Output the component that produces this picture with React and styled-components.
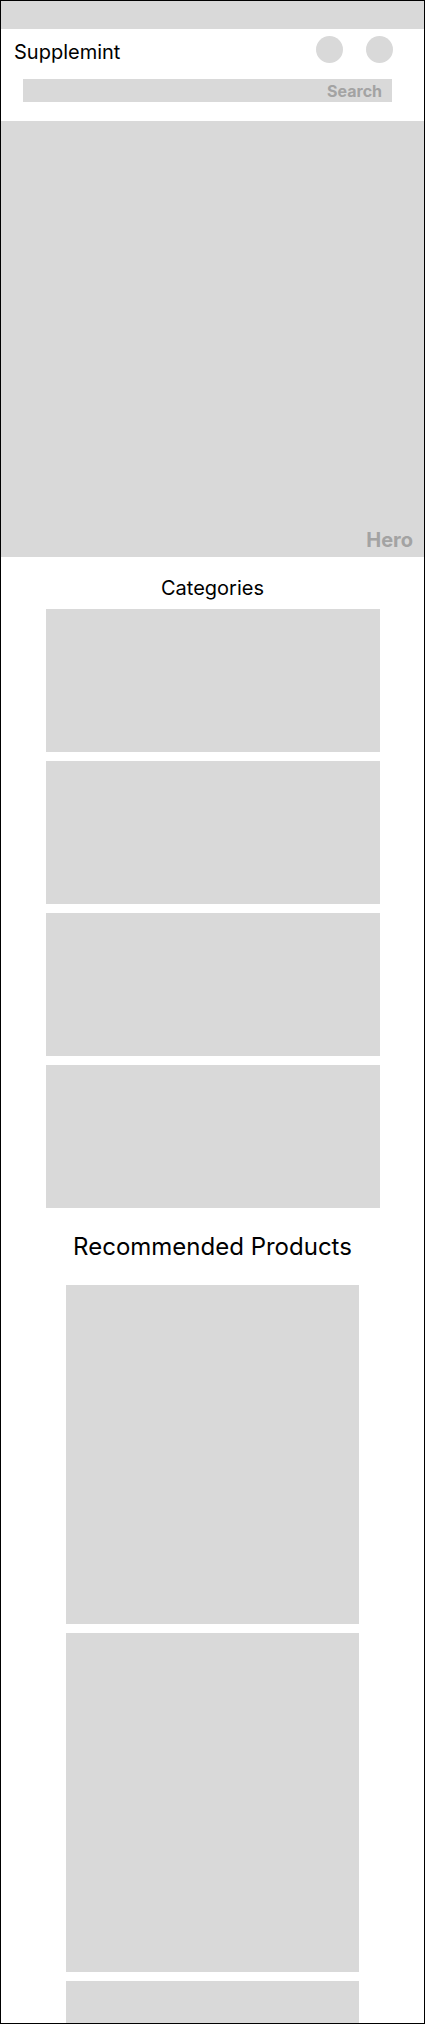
import React from 'react'
import styled, { createGlobalStyle } from 'styled-components'

const GlobalStyle = createGlobalStyle`
    html, body {
        margin: 0;
        padding: 0;
        background: #fff;
    }
    * {
        box-sizing: border-box;
    }
`

const Frame = styled.div`
    width: 425px;
    height: 2024px;
    border: 1px solid #000;
    overflow: hidden;
    background: #fff;
    font-family: Inter, "Noto Sans", sans-serif;
    color: #000;
`

const TopStrip = styled.div`
    height: 28px;
    background: #d9d9d9;
`

const Header = styled.header`
    padding: 7px 0 19px;
`

const HeaderRow = styled.div`
    display: flex;
    align-items: flex-start;
    padding: 0 31px 0 13px;
`

const Logo = styled.div`
    flex: 1;
    padding-top: 4px;
    font-size: 20px;
    line-height: 24px;
`

const IconSlot = styled.div`
    width: 27px;
    height: 27px;
    border-radius: 50%;
    background: #d9d9d9;
    margin-left: ${(p) => p.$gap || 0}px;
`

const SearchBar = styled.div`
    margin: 15px 32px 0 22px;
    height: 23px;
    background: #d9d9d9;
    display: flex;
    align-items: center;
    justify-content: flex-end;
    padding-right: 10px;
`

const PlaceholderLabel = styled.span`
    font-weight: 700;
    font-size: ${(p) => p.$size}px;
    line-height: 1;
    color: #a3a3a3;
`

const Hero = styled.section`
    height: 436px;
    background: #d9d9d9;
    display: flex;
    align-items: flex-end;
    justify-content: flex-end;
    padding: 0 11px 7px 0;
`

const Section = styled.section`
    display: flex;
    flex-direction: column;
    align-items: center;
    padding-top: ${(p) => p.$top}px;
`

const SectionTitle = styled.h2`
    margin: 0 0 ${(p) => p.$gap}px;
    font-weight: 400;
    font-size: ${(p) => p.$size}px;
    line-height: ${(p) => Math.round(p.$size * 1.2)}px;
`

const CardList = styled.div`
    display: flex;
    flex-direction: column;
    gap: 9px;
`

const Card = styled.div`
    width: ${(p) => p.$w}px;
    height: ${(p) => p.$h}px;
    background: #d9d9d9;
    flex-shrink: 0;
`

const categories = ['vitamins', 'protein', 'minerals', 'herbal']
const products = ['p1', 'p2', 'p3']

export default function App() {
    return (
        <>
            <GlobalStyle />
            <Frame>
                <TopStrip />
                <Header>
                    <HeaderRow>
                        <Logo>Supplemint</Logo>
                        <IconSlot />
                        <IconSlot $gap={23} />
                    </HeaderRow>
                    <SearchBar>
                        <PlaceholderLabel $size={16}>Search</PlaceholderLabel>
                    </SearchBar>
                </Header>

                <Hero>
                    <PlaceholderLabel $size={20}>Hero</PlaceholderLabel>
                </Hero>

                <Section $top={19}>
                    <SectionTitle $size={20} $gap={9}>Categories</SectionTitle>
                    <CardList>
                        {categories.map((c) => (
                            <Card key={c} $w={334} $h={143} />
                        ))}
                    </CardList>
                </Section>

                <Section $top={24}>
                    <SectionTitle $size={24} $gap={24}>Recommended Products</SectionTitle>
                    <CardList>
                        {products.map((p) => (
                            <Card key={p} $w={293} $h={339} />
                        ))}
                    </CardList>
                </Section>
            </Frame>
        </>
    )
}
